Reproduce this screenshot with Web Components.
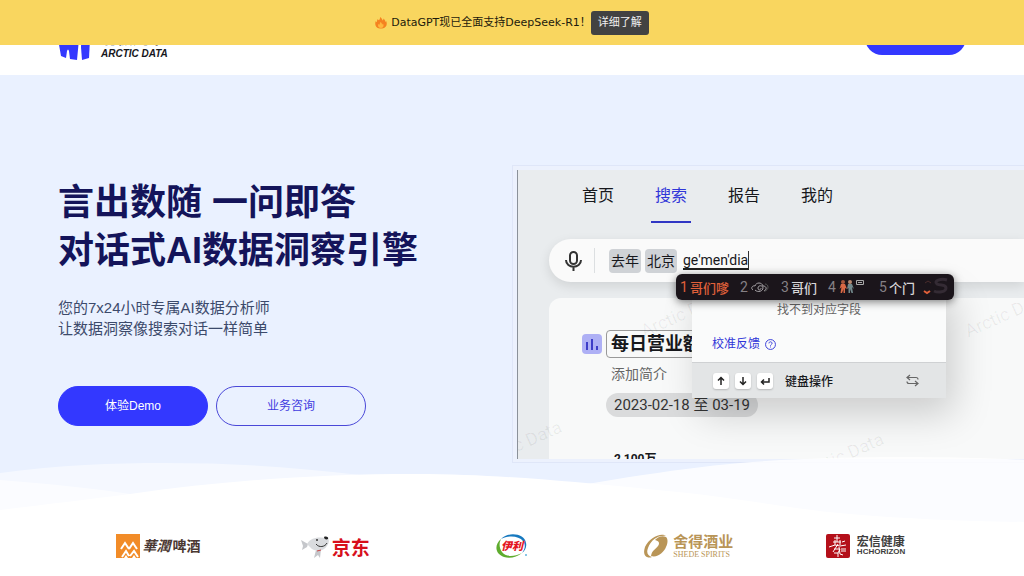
<!DOCTYPE html>
<html lang="zh-CN">
<head>
<meta charset="utf-8">
<meta name="viewport" content="width=device-width, initial-scale=1">
<title>Arctic Data</title>
<style>
:root {
  --primary: #3338ff;
  --navy: #14145a;
  --hero-bg: #eaf1ff;
}
body {
  margin: 0;
  background: #fff;
  overflow-x: hidden;
  font-family: "Liberation Sans", "Noto Sans CJK SC", sans-serif;
}
</style>
</head>
<body>
<ad-promo-bar>DataGPT现已全面支持DeepSeek-R1！</ad-promo-bar>
<ad-header></ad-header>
<main>
  <ad-hero>
    <span slot="title">言出数随 一问即答<br>对话式AI数据洞察引擎</span>
    <span slot="text">您的7x24小时专属AI数据分析师<br>让数据洞察像搜索对话一样简单</span>
    <ad-button slot="actions">体验Demo</ad-button>
    <ad-button slot="actions" outline>业务咨询</ad-button>
    <ad-search-demo slot="media"></ad-search-demo>
  </ad-hero>
  <ad-partners></ad-partners>
</main>

<script>
class BaseElement extends HTMLElement {
  constructor() {
    super();
    this.attachShadow({mode: 'open'});
    this.shadowRoot.innerHTML = this.constructor.template;
  }
}

class PromoBar extends BaseElement {
  static TAG = 'ad-promo-bar';
  static template = `
<style>
:host {
  position: fixed;
  inset: 0 0 auto;
  z-index: 10;
  box-sizing: border-box;
  height: 45px;
  display: flex;
  justify-content: center;
  align-items: center;
  background: #f9d65f;
  color: #1d1a0c;
  font: 11px/16px "DejaVu Sans", "Noto Sans CJK SC", sans-serif;
}
svg {
  width: 12px;
  height: 12px;
  margin-right: 4px;
}
button {
  padding: 0 7px;
  height: 24px;
  border: 0;
  border-radius: 3px;
  background: #424242;
  color: #f0f0f0;
  font: inherit;
  cursor: pointer;
}
</style>
<svg viewBox="0 0 12 12" aria-hidden="true">
  <path fill="#f58220" d="M5 0c1.500 1 2.500 2.400 2.600 3.600.7-.6 1-1.300 1-2.100C10 3 10.400 4 10.200 5c.5-.2.8-.5 1-1 1 2.500.6 4.500-.6 5.800C9 11.300 7.500 11.500 6 11.500S2.500 11.300 1.200 9.800C0 8.200 0 6 .8 4c.3.7.6 1 1.200 1.200C1.800 4 2 3 2.800 2c.3.600.5 1 1 1.300C4.800 2.500 5.200 1.300 5 0z"/>
  <path fill="#ffb83d" d="M5.500 5c1 .7 1.500 1.600 1.500 2.500.5-.2.800-.6.9-1.100C9 8 9 10.500 6 11 3 10.800 2.600 8.500 3.600 6.800c.2.500.5.900 1 1C4.500 6.800 5 6 5.500 5z"/>
</svg>
<span><slot></slot></span>
<button type="button">详细了解</button>
`;
}

class SiteHeader extends BaseElement {
  static TAG = 'ad-header';
  static template = `
<style>
:host {
  display: block;
  background: #fff;
}
header {
  box-sizing: border-box;
  height: 75px;
  padding: 0 58px;
  display: flex;
  justify-content: space-between;
  align-items: center;
}
a {
  display: flex;
  align-items: center;
  gap: 11px;
  color: #16161c;
  text-decoration: none;
  font-style: italic;
  font-weight: bold;
}
svg {
  width: 32px;
  height: 45px;
}
.name {
  display: block;
  font-size: 16px;
  line-height: 20px;
}
.latin {
  display: block;
  font-size: 10px;
  line-height: 10px;
}
.brand {
  padding-top: 12px;
}
button {
  width: 101px;
  height: 34px;
  border: 0;
  border-radius: 17px;
  background: var(--primary);
}
</style>
<header>
  <a href="#">
    <svg viewBox="0 0 32 45" fill="#3338ff" aria-hidden="true">
      <path d="M0 24 8 4l14-4-1 24-2 21-7-1-1-8q-1-3-2 0l-1 7-5-2z"/>
      <path d="M24 2l8 22-1 19-7 2-1-13z"/>
    </svg>
    <span class="brand">
      <span class="name">北极九章</span>
      <span class="latin">ARCTIC DATA</span>
    </span>
  </a>
  <button type="button" aria-label="体验Demo"></button>
</header>
`;
}

class PillButton extends BaseElement {
  static TAG = 'ad-button';
  static template = `
<style>
:host {
  display: block;
}
button {
  width: 150px;
  height: 40px;
  padding: 0 0 4px;
  border: 1px solid var(--primary);
  border-radius: 20px;
  background: var(--primary);
  color: #fff;
  font: inherit;
  font-size: 12px;
  cursor: pointer;
}
:host([outline]) button {
  background: transparent;
  border-color: #4a48d8;
  color: #3f3be0;
}
</style>
<button type="button"><slot></slot></button>
`;
}

class HeroSection extends BaseElement {
  static TAG = 'ad-hero';
  static template = `
<style>
:host {
  display: block;
  position: relative;
  overflow: hidden;
  background: var(--hero-bg);
}
section {
  display: grid;
  grid-template-columns: minmax(0, 1fr) minmax(0, 1fr);
  padding: 90px 0 62px;
}
.copy {
  padding: 14px 0 0 58px;
}
h1 {
  margin: 0;
  color: var(--navy);
  font-size: 36px;
  line-height: 48px;
}
p {
  margin: 22px 0 47px;
  color: #3c4a6b;
  font-size: 15px;
  line-height: 21px;
}
.actions {
  display: flex;
  gap: 8px;
}
.waves {
  position: absolute;
  left: 0;
  bottom: 0;
  width: 100%;
  height: 70px;
  pointer-events: none;
}
</style>
<section>
  <div class="copy">
    <h1><slot name="title"></slot></h1>
    <p><slot name="text"></slot></p>
    <div class="actions"><slot name="actions"></slot></div>
  </div>
  <slot name="media"></slot>
</section>
<svg class="waves" viewBox="0 0 1024 70" preserveAspectRatio="none" aria-hidden="true">
  <path fill="#fff" fill-opacity=".5" d="M0 18C60 10 110 8 165 8c70 0 130 4 195 12 80 10 150 30 240 50H0z"/>
  <path fill="#fff" fill-opacity=".6" d="M0 25c50 4 90 8 130 14 60 9 120 20 180 31H0z"/>
  <path fill="#fff" fill-opacity=".8" d="M500 44c80-14 170-30 240-36 60-5 110-6 160-6s90 1 124 3v65H500z"/>
  <path fill="#fff" d="M0 55c50-6 90-11 130-16 100-14 190-20 285-20 60 0 110 4 160 8 50 5 100 9 145 15 60 8 90 14 130 17 60 5 110 7 174 8v3H0z"/>
</svg>
`;
}

class SearchDemo extends BaseElement {
  static TAG = 'ad-search-demo';
  static template = `
<style>
:host {
  display: block;
  box-sizing: border-box;
  height: 298px;
  padding: 4px 0 4px 4px;
  border: 1px solid #dfe6f8;
  border-right: 0;
  background: #ecf1fd;
  color: #17181c;
  font-family: Roboto, "Noto Sans CJK SC", sans-serif;
}
.screen {
  position: relative;
  box-sizing: border-box;
  height: 289px;
  padding-left: 31px;
  overflow: hidden;
  border-left: 1px solid #8b9199;
  background: #e9ecee;
}
nav {
  display: flex;
  gap: 33px;
  padding: 0 29px 16px;
}
nav a {
  box-sizing: border-box;
  width: 40px;
  height: 53px;
  padding-top: 14px;
  border-bottom: 2px solid transparent;
  color: inherit;
  font-size: 16px;
  line-height: 24px;
  text-align: center;
  text-decoration: none;
}
nav a.active {
  border-color: #3036c4;
  color: #3036d8;
}
.search {
  box-sizing: border-box;
  height: 43px;
  display: flex;
  align-items: center;
  gap: 4px;
  padding-left: 16px;
  border-radius: 22px 0 0 22px;
  background: #fafafa;
  box-shadow: 0 4px 12px #0000001c;
  font-size: 14px;
}
.mic {
  width: 17px;
  height: 22px;
}
.line {
  width: 1px;
  height: 25px;
  margin: 0 10px 0 8px;
  background: #dcdfe1;
}
.tag {
  padding: 0 2px;
  border-radius: 4px;
  background: #cfd2d6;
  line-height: 24px;
}
input {
  box-sizing: border-box;
  width: 66px;
  height: 19px;
  margin-left: 2px;
  padding: 0;
  border: 0;
  border-right: 1px solid #333;
  border-bottom: 2px solid #222;
  outline: 0;
  background: none;
  color: inherit;
  font: inherit;
}
.report {
  box-sizing: border-box;
  height: 180px;
  margin-top: 16px;
  padding: 32px 0 0 33px;
  border-radius: 12px 0 0;
  background: #f8f9f9;
}
.heading {
  display: flex;
  align-items: center;
  gap: 4px;
}
.heading svg {
  width: 20px;
  height: 20px;
}
h2 {
  box-sizing: border-box;
  width: 160px;
  height: 28px;
  margin: 0;
  padding-left: 4px;
  border: 1px solid #999;
  border-radius: 4px;
  font-size: 18px;
  line-height: 26px;
}
.details {
  margin-left: 24px;
}
.intro {
  margin: 6px 0 8px 5px;
  color: #666;
  font-size: 14px;
  line-height: 21px;
}
.date {
  display: inline-block;
  padding: 0 8px;
  border-radius: 12px;
  background: #dadbdc;
  color: #333;
  font-size: 15px;
  line-height: 24px;
}
.value {
  margin: 34px 0 0 8px;
  font-size: 12px;
  font-weight: bold;
  line-height: 16px;
}
.mark {
  position: absolute;
  color: #0000000f;
  font-size: 18px;
  line-height: 20px;
  transform: rotate(-24deg);
  white-space: nowrap;
}
.menu {
  position: absolute;
  left: 174px;
  top: 111px;
  width: 254px;
  background: #fafbfb;
  box-shadow: 8px 16px 36px #0000002e;
  font-size: 12px;
}
.empty {
  padding: 20px 0 0;
  color: #666;
  line-height: 18px;
  text-align: center;
}
.feedback {
  display: flex;
  align-items: center;
  gap: 5px;
  padding: 16px 20px 9px;
  color: #3036d8;
  line-height: 18px;
  text-decoration: none;
}
.feedback svg {
  width: 11px;
  height: 11px;
}
.keys {
  display: flex;
  align-items: center;
  gap: 6px;
  height: 35px;
  padding: 0 27px 0 21px;
  border-top: 1px solid #cfd1d3;
  background: #e3e5e6;
}
.keys kbd {
  width: 16px;
  height: 16px;
  border-radius: 3px;
  background: #fff;
  box-shadow: 0 1px 2px #00000033;
}
.keys kbd svg {
  display: block;
  width: 16px;
  height: 16px;
}
.keys span {
  flex: 1;
  padding-left: 6px;
  font-weight: 500;
}
.swap {
  width: 13px;
  height: 13px;
}
.ime {
  position: absolute;
  left: 158px;
  top: 104px;
  box-sizing: border-box;
  width: 278px;
  height: 26px;
  display: flex;
  align-items: center;
  justify-content: space-between;
  margin: 0;
  padding: 0 39px 0 4px;
  border-radius: 6px;
  background: #1b151b;
  box-shadow: 0 2px 8px #00000080;
  color: #d8d6d8;
  font-size: 13px;
  font-weight: 500;
  list-style: none;
}
.ime li {
  display: flex;
  align-items: center;
  gap: 2px;
}
.ime i {
  color: #858085;
  font-size: 14px;
  font-style: normal;
  font-weight: normal;
}
.ime .picked,
.ime .picked i {
  color: #e0603a;
}
.ime svg {
  height: 16px;
}
.ime .fold {
  position: absolute;
  left: 246px;
  top: 0;
  height: 26px;
}
</style>
<div class="screen">
  <nav>
    <a href="#">首页</a>
    <a href="#" class="active">搜索</a>
    <a href="#">报告</a>
    <a href="#">我的</a>
  </nav>
  <div class="search">
    <svg class="mic" viewBox="0 0 17 22" fill="none" stroke="#333" stroke-width="2" aria-hidden="true">
      <rect x="5" y="2" width="7" height="12" rx="3.500"/>
      <path d="M1 10c0 9 15 9 15 0M8.500 17v4"/>
    </svg>
    <span class="line"></span>
    <span class="tag">去年</span>
    <span class="tag">北京</span>
    <input type="text" value="ge'men'dia" aria-label="搜索">
  </div>
  <div class="report">
    <div class="heading">
      <svg viewBox="0 0 20 20" aria-hidden="true">
        <rect width="20" height="20" rx="4" fill="#aeb0f5"/>
        <path stroke="#3d3dc8" stroke-width="2" d="M5 16V8M10 16V5M15 16v-4"/>
      </svg>
      <h2>每日营业额</h2>
    </div>
    <div class="details">
      <div class="intro">添加简介</div>
      <span class="date">2023-02-18 至 03-19</span>
      <div class="value">2,100万</div>
    </div>
  </div>
  <span class="mark" style="left: -42px; top: 264px">Arctic Data</span>
  <span class="mark" style="left: 120px; top: 134px">Arctic Data</span>
  <span class="mark" style="left: 280px; top: 276px">Arctic Data</span>
  <span class="mark" style="left: 444px; top: 134px">Arctic Data</span>
  <div class="menu">
    <div class="empty">找不到对应字段</div>
    <a class="feedback" href="#">校准反馈
      <svg viewBox="0 0 12 12" fill="none" stroke="#3036d8" aria-hidden="true">
        <circle cx="6" cy="6" r="5.400"/>
        <path d="M4.300 4.800c0-2.300 3.400-2.300 3.400 0C7.700 6 6 6 6 7.300M6 8.200v1"/>
      </svg>
    </a>
    <div class="keys">
      <kbd><svg viewBox="0 0 16 16" fill="none" stroke="#222" stroke-width="1.500"><path d="M8 12V5M5 7.500l3-3 3 3"/></svg></kbd>
      <kbd><svg viewBox="0 0 16 16" fill="none" stroke="#222" stroke-width="1.500"><path d="M8 4v7M5 8.500l3 3 3-3"/></svg></kbd>
      <kbd><svg viewBox="0 0 16 16" fill="none" stroke="#222" stroke-width="1.500"><path d="M12 5v4H4.500M7 6.500 4.500 9 7 11.500"/></svg></kbd>
      <span>键盘操作</span>
      <svg class="swap" viewBox="0 0 13 13" fill="none" stroke="#666" stroke-width="1.200" aria-hidden="true">
        <path d="M4 1 1 3.500 4 6M1 3.500h9q2 0 2 2M9 7l3 2.500L9 12M12 9.500H3q-2 0-2-2"/>
      </svg>
    </div>
  </div>
  <ol class="ime">
    <li class="picked"><i>1</i>哥们嗲</li>
    <li><i>2</i>
      <svg viewBox="0 0 20 16" fill="none" stroke="#aaa6aa" aria-hidden="true">
        <path d="M3 11C0 9 3 6 5 7c1-4 7-4 8 0 4 0 4 4 1 5M5 11c3 3 8 1 8-2s-5-3-5 0 3 2 3 0"/>
        <path stroke="#555" d="M15 5c4 0 4 6 0 7"/>
      </svg>
    </li>
    <li><i>3</i>哥们</li>
    <li><i>4</i>
      <svg viewBox="0 0 30 16" aria-hidden="true">
        <circle cx="5" cy="3" r="2" fill="#a9573c"/>
        <circle cx="12" cy="3" r="2" fill="#b98a70"/>
        <path fill="#d96845" d="M3 5h4l2 5-2-1v5H5.500v-4L4 14H2.500l1-6-2 2z"/>
        <path fill="#72898c" d="M10 5h4l2 5-2-2 1 6h-1.500L12 10v4h-1.500V9L9 10z"/>
        <path fill="none" stroke="#aaa" d="M18.500 1.500h7v4h-7zM20 3.500h4"/>
      </svg>
    </li>
    <li><i>5</i>个门</li>
    <svg class="fold" viewBox="0 0 28 26" fill="none" aria-hidden="true">
      <path stroke="#e0603a" stroke-width="2" d="m2 17 3 2 3-2"/>
      <path stroke="#4a2c2c" d="m3 9 3-2 3 2"/>
      <path stroke="#342b34" stroke-width="3" d="M25 6c-6-2-14 1-10 4 3 2 9 0 9 4s-8 5-12 3"/>
    </svg>
  </ol>
</div>
`;
}

class PartnerLogos extends BaseElement {
  static TAG = 'ad-partners';
  static template = `
<style>
:host {
  display: block;
  padding: 8px 70px 16px;
}
ul {
  display: grid;
  grid-template-columns: repeat(5, 1fr);
  align-items: center;
  margin: 0;
  padding: 0;
  list-style: none;
}
li {
  display: flex;
  justify-content: center;
  align-items: center;
  gap: 2px;
  height: 26px;
  line-height: 20px;
  white-space: nowrap;
}
svg {
  flex: none;
  height: 24px;
}
.beer {
  color: #4b3832;
  font-size: 14px;
  font-weight: 600;
}
.brush {
  font-style: italic;
}
.jd {
  align-items: flex-end;
  color: #d7101c;
  font-size: 19px;
  font-weight: bold;
}
.shede {
  gap: 5px;
  color: #b99557;
}
.horizon {
  gap: 7px;
  color: #3d3d3d;
}
.stack {
  display: flex;
  flex-direction: column;
}
.shede b {
  font-size: 15px;
  font-weight: 600;
  line-height: 16px;
}
.shede small {
  font: 8px/9px "Liberation Serif", serif;
}
.horizon b {
  font-size: 12px;
  line-height: 12px;
}
.horizon small {
  font-size: 8px;
  font-weight: bold;
  line-height: 8px;
}
</style>
<ul>
  <li class="beer">
    <svg viewBox="0 0 24 24" aria-hidden="true">
      <path fill="#f28c28" d="M0 0h24v24H0z"/>
      <path fill="none" stroke="#fff" stroke-width="2" d="m5 15 4-6 4 6M13 15l4-6 4 6M6 23l4-6 3 5M14 22l4-5 4 6"/>
      <path fill="#fff" d="m8 24 2-3 2 3zM16 24l2-3 2 3z"/>
    </svg>
    <span class="brush">華潤</span>
    <span>啤酒</span>
  </li>
  <li class="jd">
    <svg viewBox="0 0 29 24" aria-hidden="true">
      <path fill="#c5c7cb" d="M7 9 0 5l2 6-1 4 5-3zM15 15l-2 8 4-3 2 3 1-9z"/>
      <path fill="#d9dbde" d="M6 9c4-7 12-7 20-6 3 1 2 5 0 8-3 5-10 6-15 3z"/>
      <path fill="#222" d="M23 2c2-1 5 0 4 2-2 1-4 0-4-2z"/>
      <circle cx="16" cy="5" r="1" fill="#333"/>
      <path fill="none" stroke="#333" d="M15 9c3 4 9 3 11-1"/>
      <path fill="none" stroke="#c44" d="m16 16 4-1"/>
    </svg>
    <span>京东</span>
  </li>
  <li>
    <svg viewBox="0 0 32 24" font-family="Noto Sans CJK SC, sans-serif">
      <path fill="#1679bf" d="M5 5C13-3 29 0 30 9c1 4-1 8-4 10 3-4 4-8 1-12C23 2 13 1 5 5z"/>
      <path fill="#5fac2e" d="M5 5C-2 11-1 20 8 23c6 2 13 0 18-4-8 4-17 4-20-1C3 14 3 9 5 5z"/>
      <text x="5" y="16" fill="#e4151f" font-size="11" font-weight="900" font-style="italic">伊利</text>
      <circle cx="30" cy="21" r="1" fill="#61b4dd"/>
    </svg>
  </li>
  <li class="shede">
    <svg viewBox="0 0 24 24" aria-hidden="true">
      <path fill="#b99557" d="M22 2C17-2 5 4 1 13c-3 9 2 12 7 10C4 22 2 19 4 14 7 6 14 1 22 2z"/>
      <path fill="#b99557" d="M22 3c-4-2-8 0-11 3 4 1 5 3 3 6s-6 4-7 10c7 2 13-4 15-9 2-4 2-8 0-10z"/>
    </svg>
    <span class="stack"><b>舍得酒业</b><small>SHEDE SPIRITS</small></span>
  </li>
  <li class="horizon">
    <svg viewBox="0 0 24 24" aria-hidden="true">
      <rect width="24" height="24" rx="2" fill="#b4101a"/>
      <path fill="none" stroke="#fff" d="M11 1v7M8 4h6M7 8h8M9 6v5M14 6v5M3 13l6-2 5 1 6-1M12 10l-5 8M8 15h6l-2 4H8M13 13l1 7 3 1M15 15h5M15 17h5M12 19v4M16 8l3-1"/>
    </svg>
    <span class="stack"><b>宏信健康</b><small>HCHORIZON</small></span>
  </li>
</ul>
`;
}

[PromoBar, SiteHeader, PillButton, HeroSection, SearchDemo, PartnerLogos]
  .forEach((element) => customElements.define(element.TAG, element));
</script>
</body>
</html>
